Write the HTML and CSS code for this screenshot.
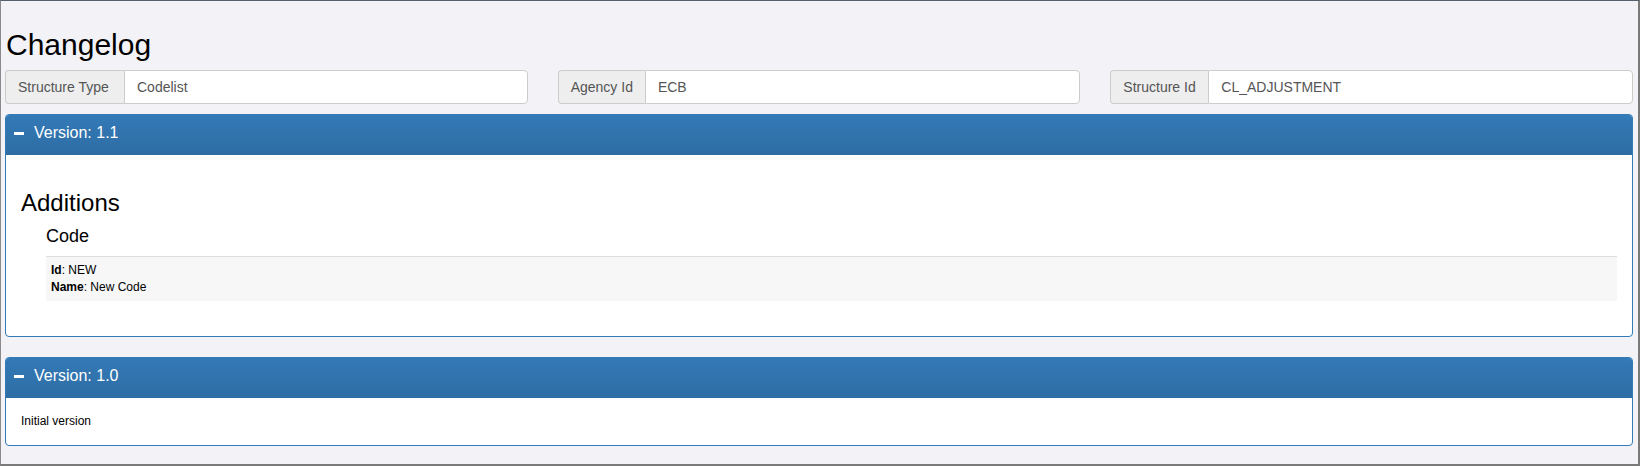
FILE: index.html
```html
<!DOCTYPE html>
<html>
<head>
<meta charset="utf-8">
<link rel="stylesheet" href="styles.css">
</head>
<body>
<div class="frame">
  <h2 class="title">Changelog</h2>
  <div class="fields">
    <div class="group"><span class="addon">Structure Type</span><span class="value">Codelist</span></div>
    <div class="group"><span class="addon">Agency Id</span><span class="value">ECB</span></div>
    <div class="group"><span class="addon">Structure Id</span><span class="value">CL_ADJUSTMENT</span></div>
  </div>

  <div class="panel">
    <div class="panel-heading"><span class="minus"></span><span class="panel-title">Version: 1.1</span></div>
    <div class="panel-body">
      <h3 class="section">Additions</h3>
      <div class="indent">
        <h4 class="kind">Code</h4>
        <div class="item">
          <div><b>Id</b>: NEW</div>
          <div><b>Name</b>: New Code</div>
        </div>
      </div>
    </div>
  </div>

  <div class="panel">
    <div class="panel-heading"><span class="minus"></span><span class="panel-title">Version: 1.0</span></div>
    <div class="panel-body short">
      <div>Initial version</div>
    </div>
  </div>
</div>
</body>
</html>
```

FILE: styles.css
```css
html, body {
  margin: 0;
  padding: 0;
  height: 100%;
}
body {
  font-family: "Liberation Sans", Arial, sans-serif;
  font-size: 12px;
  line-height: 17px;
  color: #000;
  background: #f2f2f7;
}
.frame {
  box-sizing: border-box;
  height: 466px;
  border-top: 1px solid #56606b;
  border-left: 1px solid #8a8a8a;
  border-right: 2px solid #7a7a7a;
  border-bottom: 2px solid #7a7a7a;
  padding: 7px 5px 0 4px;
  background: #f2f2f7;
  overflow: hidden;
}
.title {
  font-size: 30px;
  font-weight: normal;
  line-height: 33px;
  margin: 20px 0 9px 1px;
}
.fields {
  display: grid;
  grid-template-columns: 1fr 1fr 1fr;
  column-gap: 30px;
  margin-bottom: 10px;
}
.group {
  display: flex;
  height: 34px;
  font-size: 14px;
  line-height: 20px;
}
.addon {
  box-sizing: border-box;
  background: #eee;
  border: 1px solid #ccc;
  border-right: 0;
  border-radius: 4px 0 0 4px;
  color: #555;
  padding: 6px 12px 6px 12px;
  white-space: nowrap;
  min-width: 119px;
}
.group:nth-child(2) .addon { min-width: 87px; }
.group:nth-child(3) .addon { min-width: 98px; }
.value {
  box-sizing: border-box;
  flex: 1;
  background: #fff;
  border: 1px solid #ccc;
  border-radius: 0 4px 4px 0;
  color: #555;
  padding: 6px 12px;
}
.panel {
  background: #fff;
  border: 1px solid #337ab7;
  border-radius: 4px;
  margin-bottom: 20px;
}
.panel-heading {
  display: flex;
  align-items: center;
  height: 40px;
  box-sizing: border-box;
  padding: 0 7px 3px 7px;
  background: linear-gradient(to bottom, #337ab7 0, #2e6da4 100%);
  border-radius: 3px 3px 0 0;
  border-bottom: 1px solid #2e6da4;
  color: #fff;
}
.minus {
  width: 10px;
  height: 3px;
  background: #fff;
  margin-left: 1px;
  margin-right: 10px;
  margin-top: 0;
}
.panel-title {
  font-size: 16px;
  line-height: 18px;
}
.panel-body {
  padding: 15px 15px 15px 15px;
}
.panel-body.short {
  padding: 15px;
}
.section {
  font-size: 24px;
  font-weight: normal;
  line-height: 26px;
  margin: 20px 0 10px 0;
}
.indent {
  padding-left: 25px;
}
.kind {
  font-size: 18px;
  font-weight: normal;
  line-height: 20px;
  margin: 0 0 10px 0;
}
.item {
  background: #f7f7f7;
  border-top: 1px solid #ddd;
  padding: 5px 5px 5px 5px;
  margin-bottom: 20px;
}
.item b {
  font-weight: bold;
}
```
